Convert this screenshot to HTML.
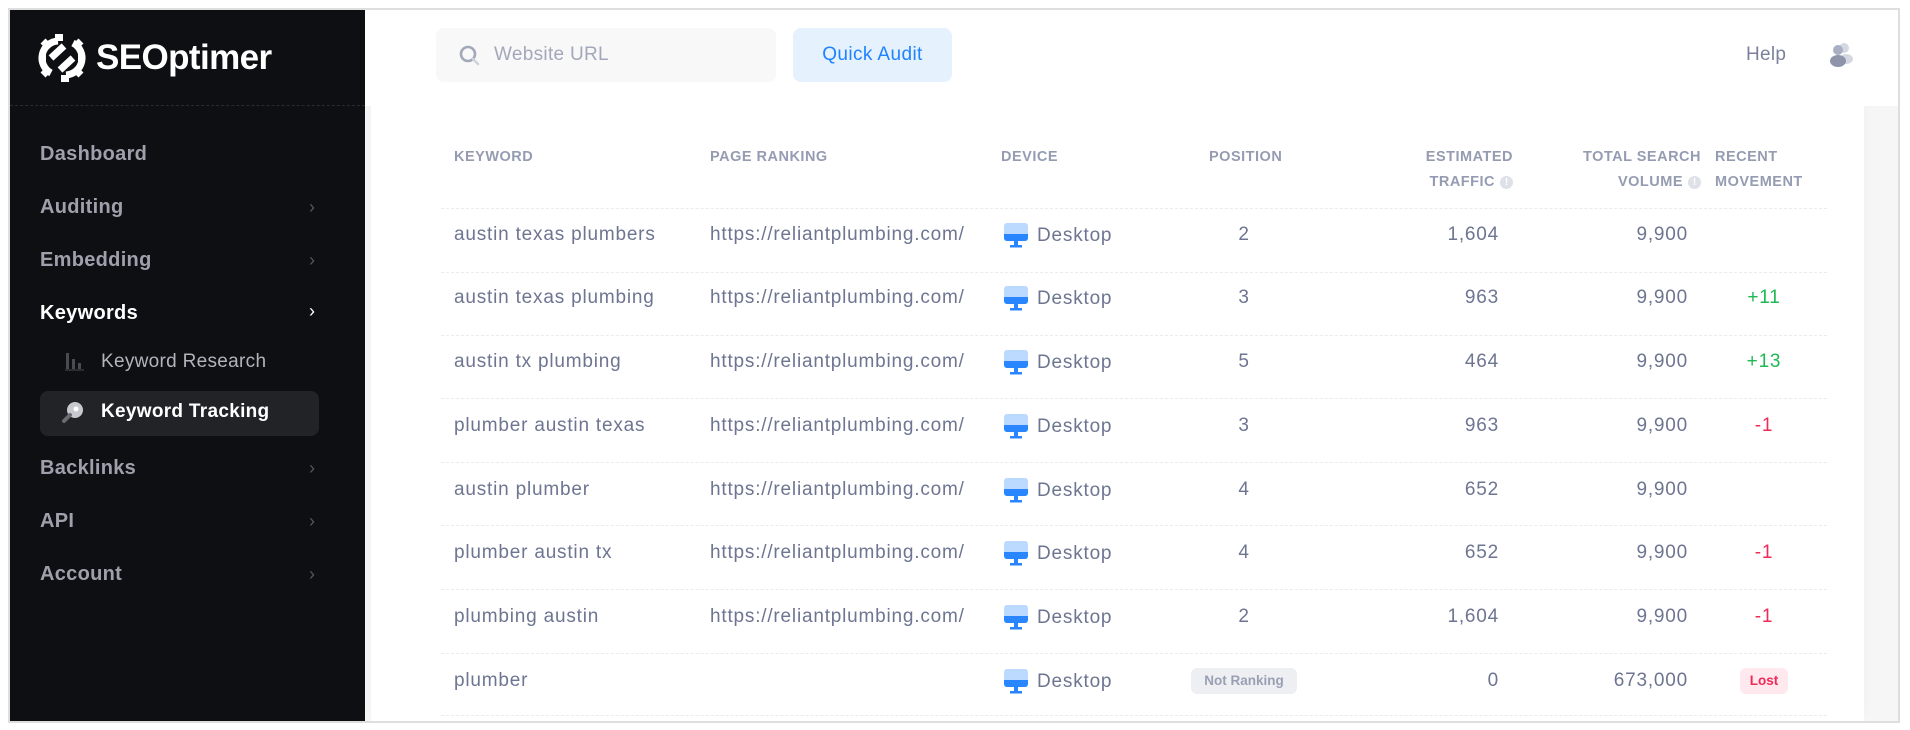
<!DOCTYPE html>
<html><head><meta charset="utf-8"><style>
*{box-sizing:border-box;margin:0;padding:0}
body{width:1910px;height:730px;background:#fff;font-family:"Liberation Sans",sans-serif;position:relative;overflow:hidden}
.frame{position:absolute;left:8px;top:8px;width:1892px;height:715px;border:2px solid #dedede}
.side{position:absolute;left:10px;top:10px;width:355px;height:711px;background:#0e0f12}
.side .sep{position:absolute;left:0;right:0;top:95px;border-top:1px dashed #2a2b30}
.logo{position:absolute;left:24px;top:20px;display:flex;align-items:center}
.logo span{color:#fff;font-weight:bold;font-size:35px;letter-spacing:-0.6px;margin-left:6px}
.nav{position:absolute;left:40px;font-size:20px;font-weight:bold;color:#a0a0ad;letter-spacing:0.3px}
.chev{position:absolute;color:#55565e;font-size:18px}
.sub{position:absolute;font-size:19px;color:#b3b3be;letter-spacing:0.3px}
.active{position:absolute;left:40px;top:391px;width:279px;height:45px;background:#222327;border-radius:8px}
.main{position:absolute;left:365px;top:10px;width:1533px;height:711px;background:#f6f6f7}
.top{position:absolute;left:365px;top:10px;width:1533px;height:96px;background:#fff}
.search{position:absolute;left:436px;top:28px;width:340px;height:54px;background:#f8f8f9;border-radius:8px}
.search span{position:absolute;left:58px;top:16px;font-size:19px;color:#a2a8ba;letter-spacing:0.3px}
.qa{position:absolute;left:793px;top:28px;width:159px;height:54px;background:#e6f1fe;border-radius:8px;color:#1f82ff;font-size:19px;text-align:center;line-height:54px;letter-spacing:0.4px}
.help{position:absolute;left:1746px;top:44px;font-size:19px;color:#7a819b;letter-spacing:0.3px}
.card{position:absolute;left:371px;top:106px;width:1493px;height:615px;background:#fff;box-shadow:0 -6px 12px rgba(0,0,0,0.03)}
.th{position:absolute;font-size:14.5px;font-weight:bold;color:#959cb2;line-height:25px;letter-spacing:0.5px}
.line{position:absolute;left:441px;width:1386px;border-top:1px dashed #ebebee}
.c{position:absolute;font-size:19px;color:#6d7591;line-height:22px;letter-spacing:0.8px;white-space:nowrap}
.r{text-align:right}
.m{text-align:center;width:60px}
.green{color:#1fb954}.red{color:#ef2a56}
.info{display:inline-block;width:13px;height:13px;border-radius:50%;background:#dfe1e8;color:#fff;font-size:10px;text-align:center;line-height:13px;vertical-align:1px;margin-left:5px;letter-spacing:0}
.badge{position:absolute;font-size:13.5px;font-weight:bold;border-radius:6px;text-align:center;line-height:26px;height:26px}
</style></head><body>
<div class="main"></div>
<div class="card"></div>
<div class="top"></div>
<div class="side">
  <div class="logo">
    <svg width="56" height="56" viewBox="0 0 56 56"><g fill="none" stroke="#fff" stroke-width="7"><path d="M24 11 A17 17 0 0 0 17 43"/><path d="M32 45 A17 17 0 0 0 39 13"/><path d="M17 28 L30 16 M26 40 L39 28"/></g><g fill="#fff"><rect x="5" y="24" width="7" height="8"/><rect x="8" y="10" width="7" height="7" transform="rotate(45 11.5 13.5)"/><rect x="21" y="4" width="8" height="7"/><rect x="44" y="24" width="7" height="8"/><rect x="41" y="39" width="7" height="7" transform="rotate(45 44.5 42.5)"/><rect x="27" y="45" width="8" height="7"/><rect x="8" y="39" width="7" height="7" transform="rotate(45 11.5 42.5)"/><rect x="41" y="10" width="7" height="7" transform="rotate(45 44.5 13.5)"/></g></svg>
    <span>SEOptimer</span>
  </div>
  <div class="sep"></div>
</div>
<div class="active"></div>
<div class="nav" style="top:143px">Dashboard</div>
<div class="nav" style="top:196px">Auditing</div><div class="chev" style="top:197px;left:309px">›</div>
<div class="nav" style="top:249px">Embedding</div><div class="chev" style="top:250px;left:309px">›</div>
<div class="nav" style="top:302px;color:#fff">Keywords</div><div class="chev" style="top:301px;left:309px;color:#fff">›</div>
<svg style="position:absolute;left:64px;top:351px" width="20" height="20"><rect x="2" y="2" width="3" height="16" fill="#4a4b52"/><rect x="8" y="8" width="3" height="10" fill="#4a4b52"/><rect x="14" y="12" width="3" height="6" fill="#4a4b52"/><rect x="1" y="18.5" width="19" height="1" fill="#4a4b52"/></svg>
<div class="sub" style="left:101px;top:351px">Keyword Research</div>
<svg style="position:absolute;left:62px;top:401px" width="22" height="22"><circle cx="13" cy="9" r="8" fill="#c8c8cf"/><circle cx="14" cy="8" r="2.5" fill="#fff"/><path d="M8 14 L2 20" stroke="#6b6c73" stroke-width="4" stroke-linecap="round"/></svg>
<div class="sub" style="left:101px;top:401px;color:#fff;font-weight:bold">Keyword Tracking</div>
<div class="nav" style="top:457px">Backlinks</div><div class="chev" style="top:458px;left:309px">›</div>
<div class="nav" style="top:510px">API</div><div class="chev" style="top:511px;left:309px">›</div>
<div class="nav" style="top:563px">Account</div><div class="chev" style="top:564px;left:309px">›</div>

<div class="search"><svg style="position:absolute;left:22px;top:16px" width="24" height="24"><circle cx="10" cy="10" r="7" fill="none" stroke="#a2a8ba" stroke-width="2.6"/><path d="M15 15 L20 20" stroke="#cfd3dc" stroke-width="2.6" stroke-linecap="round"/></svg><span>Website URL</span></div>
<div class="qa">Quick Audit</div>
<div class="help">Help</div>
<svg style="position:absolute;left:1827px;top:42px" width="28" height="26"><circle cx="17" cy="6" r="5" fill="#d5d8e0"/><ellipse cx="19" cy="17" rx="7" ry="5" fill="#d5d8e0"/><circle cx="11" cy="8" r="5" fill="#a9afc0"/><ellipse cx="11" cy="19" rx="8" ry="6" fill="#8e95ab"/></svg>

<div class="th" style="left:454px;top:145px">KEYWORD</div>
<div class="th" style="left:710px;top:145px">PAGE RANKING</div>
<div class="th" style="left:1001px;top:145px">DEVICE</div>
<div class="th" style="left:1209px;top:145px">POSITION</div>
<div class="th r" style="left:1360px;width:153px;top:145px">ESTIMATED<br>TRAFFIC<span class="info">!</span></div>
<div class="th r" style="left:1540px;width:161px;top:145px">TOTAL SEARCH<br>VOLUME<span class="info">!</span></div>
<div class="th" style="left:1715px;top:145px">RECENT<br>MOVEMENT</div>

<div class="line" style="top:208px"></div><div class="line" style="top:272px"></div><div class="line" style="top:335px"></div><div class="line" style="top:398px"></div><div class="line" style="top:462px"></div><div class="line" style="top:525px"></div><div class="line" style="top:589px"></div><div class="line" style="top:653px"></div><div class="line" style="top:715px"></div>

<svg width="0" height="0" style="position:absolute"><defs><symbol id="dk" viewBox="0 0 26 28"><rect x="1" y="1" width="24" height="18" rx="3" fill="#bcd9ff"/><path d="M1 12 H25 V16 a3 3 0 0 1 -3 3 H4 a3 3 0 0 1 -3 -3z" fill="#2a86ff"/><rect x="11" y="19" width="4" height="5" fill="#2a86ff"/><rect x="7" y="23" width="12" height="2.5" fill="#2a86ff"/></symbol></defs></svg>

<div class="c" style="left:454px;top:224px">austin texas plumbers</div>
<div class="c" style="left:454px;top:287px">austin texas plumbing</div>
<div class="c" style="left:454px;top:351px">austin tx plumbing</div>
<div class="c" style="left:454px;top:415px">plumber austin texas</div>
<div class="c" style="left:454px;top:479px">austin plumber</div>
<div class="c" style="left:454px;top:542px">plumber austin tx</div>
<div class="c" style="left:454px;top:606px">plumbing austin</div>
<div class="c" style="left:454px;top:670px">plumber</div>

<div class="c" style="left:710px;top:224px">https://reliantplumbing.com/</div>
<div class="c" style="left:710px;top:287px">https://reliantplumbing.com/</div>
<div class="c" style="left:710px;top:351px">https://reliantplumbing.com/</div>
<div class="c" style="left:710px;top:415px">https://reliantplumbing.com/</div>
<div class="c" style="left:710px;top:479px">https://reliantplumbing.com/</div>
<div class="c" style="left:710px;top:542px">https://reliantplumbing.com/</div>
<div class="c" style="left:710px;top:606px">https://reliantplumbing.com/</div>

<svg style="position:absolute;left:1003px;top:222px" width="26" height="28"><use href="#dk"/></svg><div class="c" style="left:1037px;top:225px">Desktop</div>
<svg style="position:absolute;left:1003px;top:285px" width="26" height="28"><use href="#dk"/></svg><div class="c" style="left:1037px;top:288px">Desktop</div>
<svg style="position:absolute;left:1003px;top:349px" width="26" height="28"><use href="#dk"/></svg><div class="c" style="left:1037px;top:352px">Desktop</div>
<svg style="position:absolute;left:1003px;top:413px" width="26" height="28"><use href="#dk"/></svg><div class="c" style="left:1037px;top:416px">Desktop</div>
<svg style="position:absolute;left:1003px;top:477px" width="26" height="28"><use href="#dk"/></svg><div class="c" style="left:1037px;top:480px">Desktop</div>
<svg style="position:absolute;left:1003px;top:540px" width="26" height="28"><use href="#dk"/></svg><div class="c" style="left:1037px;top:543px">Desktop</div>
<svg style="position:absolute;left:1003px;top:604px" width="26" height="28"><use href="#dk"/></svg><div class="c" style="left:1037px;top:607px">Desktop</div>
<svg style="position:absolute;left:1003px;top:668px" width="26" height="28"><use href="#dk"/></svg><div class="c" style="left:1037px;top:671px">Desktop</div>

<div class="c m" style="left:1214px;top:224px">2</div>
<div class="c m" style="left:1214px;top:287px">3</div>
<div class="c m" style="left:1214px;top:351px">5</div>
<div class="c m" style="left:1214px;top:415px">3</div>
<div class="c m" style="left:1214px;top:479px">4</div>
<div class="c m" style="left:1214px;top:542px">4</div>
<div class="c m" style="left:1214px;top:606px">2</div>
<div class="badge" style="left:1191px;top:668px;width:106px;background:#eeeff2;color:#9aa0b4">Not Ranking</div>

<div class="c r" style="left:1399px;width:100px;top:224px">1,604</div>
<div class="c r" style="left:1399px;width:100px;top:287px">963</div>
<div class="c r" style="left:1399px;width:100px;top:351px">464</div>
<div class="c r" style="left:1399px;width:100px;top:415px">963</div>
<div class="c r" style="left:1399px;width:100px;top:479px">652</div>
<div class="c r" style="left:1399px;width:100px;top:542px">652</div>
<div class="c r" style="left:1399px;width:100px;top:606px">1,604</div>
<div class="c r" style="left:1399px;width:100px;top:670px">0</div>

<div class="c r" style="left:1568px;width:120px;top:224px">9,900</div>
<div class="c r" style="left:1568px;width:120px;top:287px">9,900</div>
<div class="c r" style="left:1568px;width:120px;top:351px">9,900</div>
<div class="c r" style="left:1568px;width:120px;top:415px">9,900</div>
<div class="c r" style="left:1568px;width:120px;top:479px">9,900</div>
<div class="c r" style="left:1568px;width:120px;top:542px">9,900</div>
<div class="c r" style="left:1568px;width:120px;top:606px">9,900</div>
<div class="c r" style="left:1568px;width:120px;top:670px">673,000</div>

<div class="c m green" style="left:1734px;top:287px">+11</div>
<div class="c m green" style="left:1734px;top:351px">+13</div>
<div class="c m red" style="left:1734px;top:415px">-1</div>
<div class="c m red" style="left:1734px;top:542px">-1</div>
<div class="c m red" style="left:1734px;top:606px">-1</div>
<div class="badge" style="left:1740px;top:668px;width:48px;background:#ffe9ef;color:#ef2a56">Lost</div>

<div class="frame"></div>
</body></html>
